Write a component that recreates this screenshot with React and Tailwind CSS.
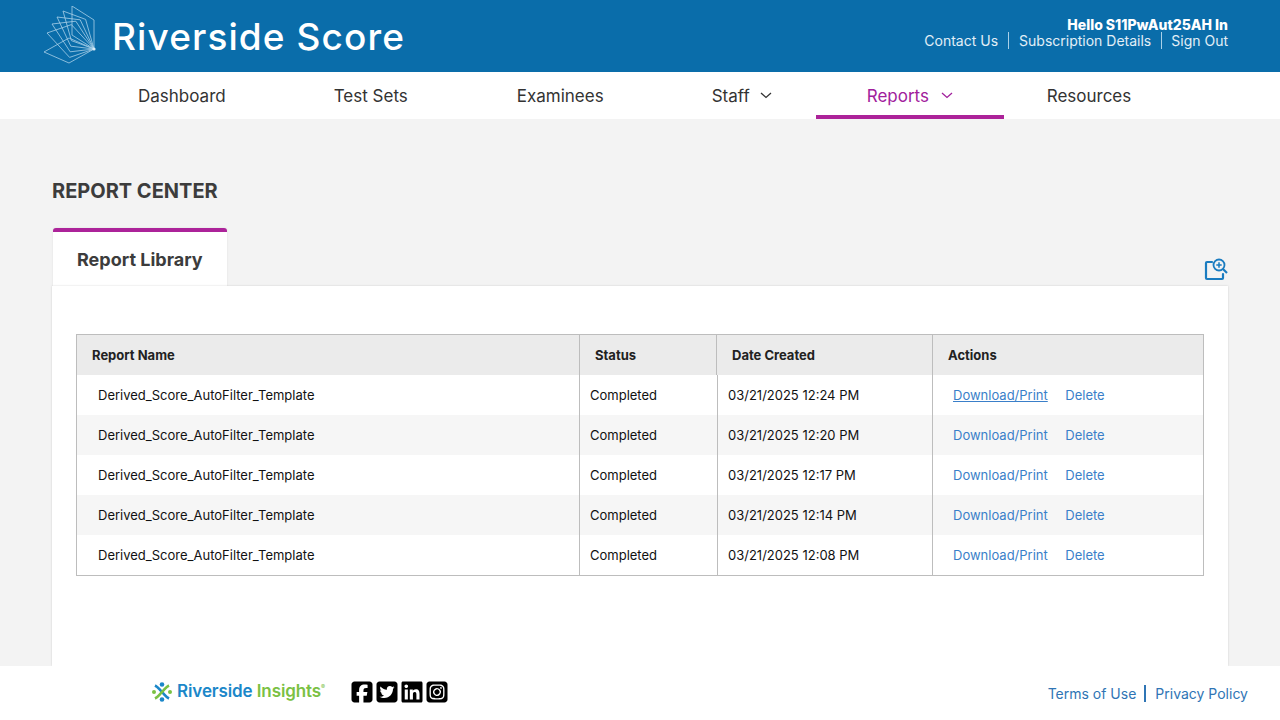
import { FaSquareFacebook, FaSquareTwitter, FaLinkedin, FaSquareInstagram } from "react-icons/fa6";

const reports = [
    { name: "Derived_Score_AutoFilter_Template", status: "Completed", date: "03/21/2025 12:24 PM" },
    { name: "Derived_Score_AutoFilter_Template", status: "Completed", date: "03/21/2025 12:20 PM" },
    { name: "Derived_Score_AutoFilter_Template", status: "Completed", date: "03/21/2025 12:17 PM" },
    { name: "Derived_Score_AutoFilter_Template", status: "Completed", date: "03/21/2025 12:14 PM" },
    { name: "Derived_Score_AutoFilter_Template", status: "Completed", date: "03/21/2025 12:08 PM" },
];

// each page of the book logo: F -> R -> tip -> Q -> F
const tips = [[-22, -43], [-31, -38], [-37, -32], [-42, -25], [-47, -16], [-50, 3]];

function BookLogo() {
    const F = [50, 43];
    return (
        <svg width="54" height="60" viewBox="0 0 54 60" fill="none" stroke="#a9d0e8" strokeWidth="0.8" strokeLinejoin="round">
            {tips.map((tip, i) => {
                const t = i / (tips.length - 1);
                const ux = -22 - 3 * t;
                const uy = -14 + 28 * t;
                const vx = tip[0] - ux;
                const vy = tip[1] - uy;
                const d = `M${F[0]} ${F[1]}L${F[0] + ux} ${F[1] + uy}L${F[0] + tip[0]} ${F[1] + tip[1]}L${F[0] + vx} ${F[1] + vy}Z`;
                return <path key={i} d={d} />;
            })}
            <circle cx="50" cy="43" r="1.6" fill="#dcecf6" stroke="none" />
        </svg>
    );
}

function Chevron() {
    return (
        <svg width="12" height="7" viewBox="0 0 12 7" fill="none" stroke="currentColor" strokeWidth="1.3" className="-mt-[2px]">
            <path d="M1 1l5 4.5L11 1" />
        </svg>
    );
}

function PeopleLogo() {
    return (
        <svg width="20" height="20" viewBox="0 0 20 20">
            <circle cx="10" cy="2.5" r="2.3" fill="#1b87c9" />
            <circle cx="10" cy="17.5" r="2.3" fill="#1b87c9" />
            <circle cx="2" cy="10" r="2" fill="#7ac143" />
            <circle cx="18" cy="10" r="2" fill="#7ac143" />
            <path d="M3 3.5C6 5 7 7 10 10c3 3 4 5 7 6.5" stroke="#1b87c9" strokeWidth="2.6" fill="none" />
            <path d="M17 3.5C14 5 13 7 10 10c-3 3-4 5-7 6.5" stroke="#7ac143" strokeWidth="2.6" fill="none" />
        </svg>
    );
}

function ReportSearchIcon() {
    return (
        <svg width="24" height="24" viewBox="0 0 24 24" fill="none" stroke="#1a7cc0" strokeWidth="2.2">
            <path d="M8 5H3a1 1 0 0 0-1 1v15a1 1 0 0 0 1 1h15a1 1 0 0 0 1-1v-4" strokeLinecap="round" />
            <circle cx="15" cy="8" r="5.5" strokeWidth="1.8" />
            <path d="M15 5.3v5.4M12.3 8h5.4" strokeWidth="1.5" />
            <path d="M19 12l4 4" />
        </svg>
    );
}

function App() {
    return (
        <div className="w-[1280px] h-[720px] overflow-hidden flex flex-col bg-[#f3f3f3] font-['Inter',sans-serif]">
            <header className="h-[72px] shrink-0 bg-[#0a6daa] flex justify-between pl-[44px] pr-[52px]">
                <div className="flex items-center">
                    <BookLogo />
                    <span className="ml-[14px] pt-[2px] text-white text-[37px] font-medium tracking-[1.1px]">Riverside Score</span>
                </div>
                <div className="flex flex-col items-end pt-[16px] text-white text-sm leading-[17px]">
                    <div className="font-extrabold">Hello S11PwAut25AH In</div>
                    <div className="flex items-center text-[#e2eff7] -mt-[1px]">
                        <span>Contact Us</span>
                        <span className="mx-[10px] h-[17px] border-l border-[#a9d0e8]"></span>
                        <span>Subscription Details</span>
                        <span className="ml-[10px] mr-[9px] h-[17px] border-l border-[#a9d0e8]"></span>
                        <span>Sign Out</span>
                    </div>
                </div>
            </header>

            <nav className="h-[47px] shrink-0 bg-white flex pl-[84px] text-[#333333] text-[17px]">
                <a className="pl-[54px] pr-[54px] pt-[2px] flex items-center">Dashboard</a>
                <a className="pl-[54px] pr-[55px] pt-[2px] flex items-center">Test Sets</a>
                <a className="pl-[54px] pr-[53px] pt-[2px] flex items-center">Examinees</a>
                <a className="pl-[55px] pr-[44px] pt-[2px] flex items-center gap-[10px]">Staff <Chevron /></a>
                <a className="w-[188px] pl-[51px] pt-[6px] flex items-center gap-[12px] text-[#a1209c] border-b-4 border-[#ac2399]">Reports <Chevron /></a>
                <a className="pl-[43px] pt-[2px] flex items-center">Resources</a>
            </nav>

            <main className="flex-1 px-[52px] min-h-0 flex flex-col">
                <h1 className="mt-[60px] h-[24px] text-[20px] leading-[24px] font-bold text-[#3c3c3c]">REPORT CENTER</h1>
                <div className="mt-[25px] flex justify-between items-end h-[58px]">
                    <div className="ml-[1px] w-[174px] h-[58px] bg-white border-t-4 border-[#ac2399] rounded-t-[3px] pl-[24px] pt-[17px] text-[18px] leading-[22px] font-bold text-[#3c3c3c] shadow-[0_0_2px_rgba(0,0,0,0.1)]">Report Library</div>
                    <div className="mb-[5px]"><ReportSearchIcon /></div>
                </div>
                <section className="flex-1 bg-white shadow-[0_0_2px_rgba(0,0,0,0.15)] pt-[48px] px-[24px]">
                    <div className="w-[1128px] border border-[#bdbdbd] text-[13px]">
                        <div className="flex h-[40px] bg-[#ebebeb] text-[#222222] font-bold">
                            <div className="w-[503px] pl-[15px] pt-[1px] flex items-center border-r border-[#bdbdbd]">Report Name</div>
                            <div className="w-[137px] pl-[15px] pt-[1px] flex items-center border-r border-[#bdbdbd]">Status</div>
                            <div className="w-[216px] pl-[15px] pt-[1px] flex items-center border-r border-[#bdbdbd]">Date Created</div>
                            <div className="pl-[15px] pt-[1px] flex items-center">Actions</div>
                        </div>
                        {reports.map((report, i) => (
                            <div key={report.date} className={i % 2 === 1 ? "flex h-[40px] bg-[#f6f6f6]" : "flex h-[40px] bg-white"}>
                                <div className="w-[503px] pl-[21px] pt-[1px] flex items-center text-[#111111] border-r border-[#bdbdbd]">{report.name}</div>
                                <div className="w-[138px] pl-[10px] pt-[1px] flex items-center text-[#111111] border-r border-[#bdbdbd]">{report.status}</div>
                                <div className="w-[215px] pl-[10px] pt-[1px] flex items-center text-[#111111] border-r border-[#bdbdbd]">{report.date}</div>
                                <div className="pl-[20px] pt-[1px] flex items-center text-[#3a7fc9]">
                                    <a className={i === 0 ? "underline" : ""}>Download/Print</a>
                                    <a className="ml-[17.5px]">Delete</a>
                                </div>
                            </div>
                        ))}
                    </div>
                </section>
            </main>

            <footer className="h-[54px] shrink-0 bg-white flex justify-between pl-[152px] pr-[32px]">
                <div className="flex items-center pb-[2px]">
                    <PeopleLogo />
                    <div className="ml-[5px] w-[147px] flex items-start whitespace-nowrap">
                        <span className="text-[17px] font-semibold text-[#1b87c9] tracking-[-0.1px]">Riverside <span className="text-[#7ac143]">Insights</span></span>
                        <span className="text-[6px] text-[#7ac143] mt-[3px]">®</span>
                    </div>
                    <div className="ml-[26px] flex gap-[1px] text-black text-[24px]">
                        <FaSquareFacebook />
                        <FaSquareTwitter />
                        <FaLinkedin />
                        <FaSquareInstagram />
                    </div>
                </div>
                <div className="flex items-center text-[#2f75b5] text-sm pt-[1px]">
                    <span>Terms of Use</span>
                    <span className="ml-[8px] mr-[9px] h-[17px] border-l-2 border-[#2f75b5]"></span>
                    <span>Privacy Policy</span>
                </div>
            </footer>
        </div>
    );
}

export default App;
